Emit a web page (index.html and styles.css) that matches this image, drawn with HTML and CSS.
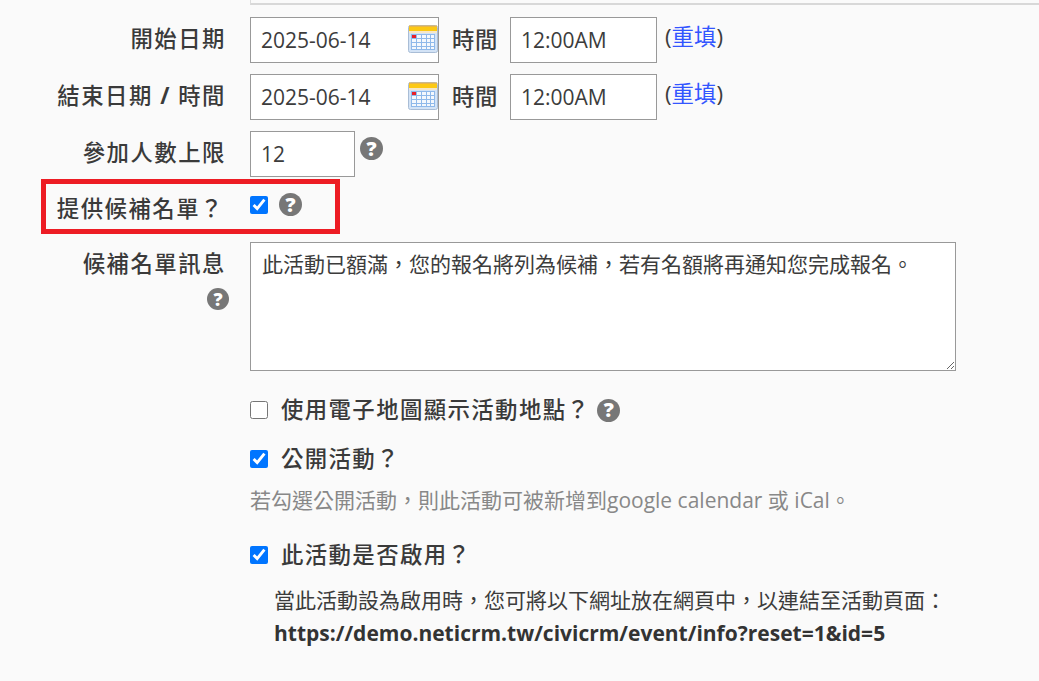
FILE: index.html
```html
<!DOCTYPE html>
<html lang="zh-Hant">
<head>
<meta charset="utf-8">
<title>活動設定</title>
<link rel="stylesheet" href="styles.css">
</head>
<body>
<svg class="defs" width="0" height="0" aria-hidden="true">
  <defs>
    <symbol id="cal" viewBox="0 0 30 28">
      <rect x="0.5" y="0.5" width="29" height="27" rx="2" fill="#d3e3f6" stroke="#a9bdd6"/>
      <rect x="1" y="1" width="28" height="5" fill="#fcc914"/>
      <rect x="1" y="0.5" width="28" height="1.5" fill="#e8b64a"/>
      <rect x="1" y="6" width="28" height="2" fill="#f6e7c8"/>
      <rect x="3" y="9" width="24" height="16" fill="#8fb9ea"/>
      <g fill="#f4f8fd">
        <rect x="4" y="10" width="4" height="3"/><rect x="9" y="10" width="4" height="3"/><rect x="14" y="10" width="4" height="3"/><rect x="19" y="10" width="3" height="3"/><rect x="23" y="10" width="3" height="3"/>
        <rect x="4" y="14" width="4" height="3"/><rect x="9" y="14" width="4" height="3"/><rect x="14" y="14" width="4" height="3"/><rect x="19" y="14" width="3" height="3"/><rect x="23" y="14" width="3" height="3"/>
        <rect x="4" y="18" width="4" height="3"/><rect x="9" y="18" width="4" height="3"/><rect x="14" y="18" width="4" height="3"/><rect x="19" y="18" width="3" height="3"/><rect x="23" y="18" width="3" height="3"/>
        <rect x="4" y="22" width="4" height="2"/><rect x="9" y="22" width="4" height="2"/><rect x="14" y="22" width="4" height="2"/><rect x="19" y="22" width="3" height="2"/><rect x="23" y="22" width="3" height="2"/>
      </g>
      <rect x="4" y="10" width="4" height="3" fill="#e8202a"/>
    </symbol>
  </defs>
</svg>

<div class="top-strip"></div>

<form class="form">
  <div class="row">
    <label class="label">開始日期</label>
    <div class="field inline">
      <span class="date-box"><span class="value">2025-06-14</span><svg class="cal"><use href="#cal"/></svg></span>
      <span class="time-label">時間</span>
      <span class="time-box value">12:00AM</span>
      <span class="reset">(<a href="#">重填</a>)</span>
    </div>
  </div>

  <div class="row">
    <label class="label">結束日期 <b class="slash">/</b> 時間</label>
    <div class="field inline">
      <span class="date-box"><span class="value">2025-06-14</span><svg class="cal"><use href="#cal"/></svg></span>
      <span class="time-label">時間</span>
      <span class="time-box value">12:00AM</span>
      <span class="reset">(<a href="#">重填</a>)</span>
    </div>
  </div>

  <div class="row">
    <label class="label">參加人數上限</label>
    <div class="field inline">
      <span class="num-box value">12</span>
      <span class="help help-num">?</span>
    </div>
  </div>

  <div class="row row-wait">
    <div class="highlight"></div>
    <label class="label label-wait">提供候補名單？</label>
    <div class="field inline">
      <input class="check" type="checkbox" checked>
      <span class="help help-wait">?</span>
    </div>
  </div>

  <div class="row">
    <div class="label label-stack">
      <span>候補名單訊息</span>
      <span class="help help-msg">?</span>
    </div>
    <div class="field">
      <textarea class="message">此活動已額滿，您的報名將列為候補，若有名額將再通知您完成報名。</textarea>
    </div>
  </div>

  <div class="options">
    <div class="option option-map">
      <input class="check" type="checkbox">
      <span class="option-text">使用電子地圖顯示活動地點？</span>
      <span class="help help-map">?</span>
    </div>
    <div class="option option-public">
      <input class="check" type="checkbox" checked>
      <span class="option-text">公開活動？</span>
    </div>
    <p class="hint">若勾選公開活動，則此活動可被新增到google calendar 或 iCal。</p>
    <div class="option option-active">
      <input class="check" type="checkbox" checked>
      <span class="option-text">此活動是否啟用？</span>
    </div>
    <div class="active-note">
      <p>當此活動設為啟用時，您可將以下網址放在網頁中，以連結至活動頁面：</p>
      <p class="url">https://demo.neticrm.tw/civicrm/event/info?reset=1&amp;id=5</p>
    </div>
  </div>
</form>
</body>
</html>
```
FILE: styles.css
```css
* { box-sizing: border-box; }
html, body { margin: 0; padding: 0; }
body {
  width: 1039px;
  height: 681px;
  overflow: hidden;
  background: #fafafa;
  color: #3c3c3c;
  font-family: "Open Sans", "Noto Sans CJK TC", sans-serif;
  font-size: 21px;
}
.defs { position: absolute; }
.top-strip {
  height: 5px;
  margin-left: 250px;
  border-left: 1px solid #ddd;
  border-bottom: 2px solid #d8d8d8;
}
.form { padding-top: 12px; }
.row {
  position: relative;
  display: grid;
  grid-template-columns: 226px 1fr;
  column-gap: 24px;
  margin-bottom: 11px;
}
.label {
  text-align: right;
  font-weight: 500;
  font-size: 22.4px;
  letter-spacing: 1.5px;
  line-height: 44px;
  color: #3a3a3a;
}
.slash { font-weight: 700; }
.inline { display: flex; align-items: flex-start; }
.date-box, .time-box, .num-box {
  display: flex;
  align-items: center;
  height: 46px;
  background: #fff;
  border: 1px solid #999;
  padding-left: 10px;
}
.date-box { width: 189px; position: relative; }
.value { line-height: 1; }
.cal { position: absolute; right: 0; top: 7px; width: 30px; height: 28px; }
.time-label { margin-left: 13px; font-size: 22.4px; font-weight: 500; letter-spacing: .5px; line-height: 46px; width: 46px; }
.time-box { width: 147px; margin-left: 12px; }
.reset { margin-left: 8px; font-size: 22.4px; line-height: 40px; }
.reset a { color: #3355ff; text-decoration: none; }
.num-box { width: 105px; }
.help {
  display: inline-flex;
  align-items: center;
  justify-content: center;
  width: 23px;
  height: 23px;
  border-radius: 50%;
  background: #777;
  color: #fff;
  font-size: 20px;
  font-weight: 800;
  letter-spacing: 0;
  line-height: 1;
}
.help-num { margin: 6px 0 0 5px; }
.row-wait { height: 42px; margin-bottom: 12px; }
.highlight {
  position: absolute;
  left: 41px;
  top: -9px;
  width: 299px;
  height: 55px;
  border: 5px solid #ed1c24;
}
.label-wait { line-height: 42px; padding-right: 2px; }
.check { width: 18px; height: 18px; margin: 0; accent-color: #0075ff; }
.row-wait .check { margin: 8px 0 0 0; }
.help-wait { margin: 5px 0 0 11px; }
.label-stack { line-height: 44px; display: flex; flex-direction: column; align-items: flex-end; }
.help-msg { margin: 2px -3px 0 0; font-size: 18px; width: 22px; height: 22px; }
.message {
  display: block;
  width: 706px;
  height: 129px;
  padding: 7px 11px;
  border: 1px solid #999;
  background: #fff;
  color: #3c3c3c;
  font: inherit;
  line-height: 1.4;
}
.options { margin-left: 250px; }
.option { display: flex; align-items: center; font-weight: 500; font-size: 22.4px; letter-spacing: 1.4px; }
.option-text { margin-left: 13px; color: #3a3a3a; line-height: 34px; }
.option-map { margin-top: 22px; }
.help-map { margin-left: 7px; }
.option-public { margin-top: 15px; }
.hint { margin: 7px 0 0; color: #888; line-height: 34px; }
.option-active { margin-top: 21px; }
.active-note { margin: 12px 0 0 24px; line-height: 33px; }
.active-note p { margin: 0; }
.url { font-weight: 700; color: #333; }
```
